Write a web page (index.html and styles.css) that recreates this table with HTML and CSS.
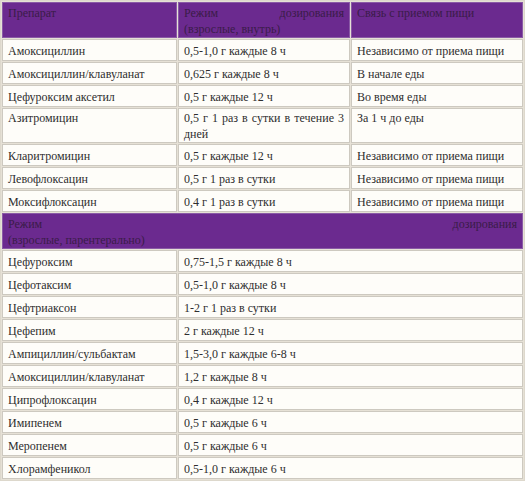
FILE: index.html
```html
<!DOCTYPE html>
<html>
<head>
    <meta charset="UTF-8">
    <title>Антибиотики</title>
    <link rel="stylesheet" href="styles.css">
</head>
<body>
    <table class="drugs">
        <colgroup>
            <col class="col-name">
            <col class="col-dose">
            <col class="col-food">
        </colgroup>
        <tr class="head">
            <td>Препарат</td>
            <td><div class="spread"><span>Режим</span><span>дозирования</span></div>(взрослые, внутрь)</td>
            <td>Связь с приемом пищи</td>
        </tr>
        <tr><td>Амоксициллин</td><td>0,5-1,0 г каждые 8 ч</td><td>Независимо от приема пищи</td></tr>
        <tr><td>Амоксициллин/клавуланат</td><td>0,625 г каждые 8 ч</td><td>В начале еды</td></tr>
        <tr><td>Цефуроксим аксетил</td><td>0,5 г каждые 12 ч</td><td>Во время еды</td></tr>
        <tr class="tall"><td>Азитромицин</td><td class="justify">0,5 г 1 раз в сутки в течение 3 дней</td><td>За 1 ч до еды</td></tr>
        <tr><td>Кларитромицин</td><td>0,5 г каждые 12 ч</td><td>Независимо от приема пищи</td></tr>
        <tr><td>Левофлоксацин</td><td>0,5 г 1 раз в сутки</td><td>Независимо от приема пищи</td></tr>
        <tr><td>Моксифлоксацин</td><td>0,4 г 1 раз в сутки</td><td>Независимо от приема пищи</td></tr>
        <tr class="head">
            <td colspan="3"><div class="spread"><span>Режим</span><span>дозирования</span></div>(взрослые, парентерально)</td>
        </tr>
        <tr><td>Цефуроксим</td><td colspan="2">0,75-1,5 г каждые 8 ч</td></tr>
        <tr><td>Цефотаксим</td><td colspan="2">0,5-1,0 г каждые 8 ч</td></tr>
        <tr><td>Цефтриаксон</td><td colspan="2">1-2 г 1 раз в сутки</td></tr>
        <tr><td>Цефепим</td><td colspan="2">2 г каждые 12 ч</td></tr>
        <tr><td>Ампициллин/сульбактам</td><td colspan="2">1,5-3,0 г каждые 6-8 ч</td></tr>
        <tr><td>Амоксициллин/клавуланат</td><td colspan="2">1,2 г каждые 8 ч</td></tr>
        <tr><td>Ципрофлоксацин</td><td colspan="2">0,4 г каждые 12 ч</td></tr>
        <tr><td>Имипенем</td><td colspan="2">0,5 г каждые 6 ч</td></tr>
        <tr><td>Меропенем</td><td colspan="2">0,5 г каждые 6 ч</td></tr>
        <tr><td>Хлорамфеникол</td><td colspan="2">0,5-1,0 г каждые 6 ч</td></tr>
    </table>
</body>
</html>
```

FILE: styles.css
```css
* {
    margin: 0;
    padding: 0;
    box-sizing: border-box;
}

body {
    background: #ffffff;
    font-family: "Liberation Serif", serif;
    font-size: 12px;
    color: #2e2e2e;
}

.drugs {
    width: 525px;
    table-layout: fixed;
    border-collapse: separate;
    border-spacing: 1px;
    background: #e6e1d6;
    border: 1px solid #ddd8cc;
    font: inherit;
}

.col-name {
    width: 175px;
}

.col-dose {
    width: 172px;
}

.drugs td {
    background: #fefdf9;
    border: 1px solid #cdc9c0;
    height: 22px;
    padding: 3px 5px 1px 5px;
    line-height: 16px;
    vertical-align: top;
}

.drugs .head td {
    background: #6b2a8f;
    border-color: #8a5aa6;
    color: #3a1c48;
    height: 34px;
    padding: 2px 5px 0 5px;
}

.drugs .tall td {
    height: 35px;
    padding: 2px 5px 0 5px;
    line-height: 15.5px;
}

.spread {
    display: flex;
    justify-content: space-between;
}

.justify {
    text-align: justify;
}
```
